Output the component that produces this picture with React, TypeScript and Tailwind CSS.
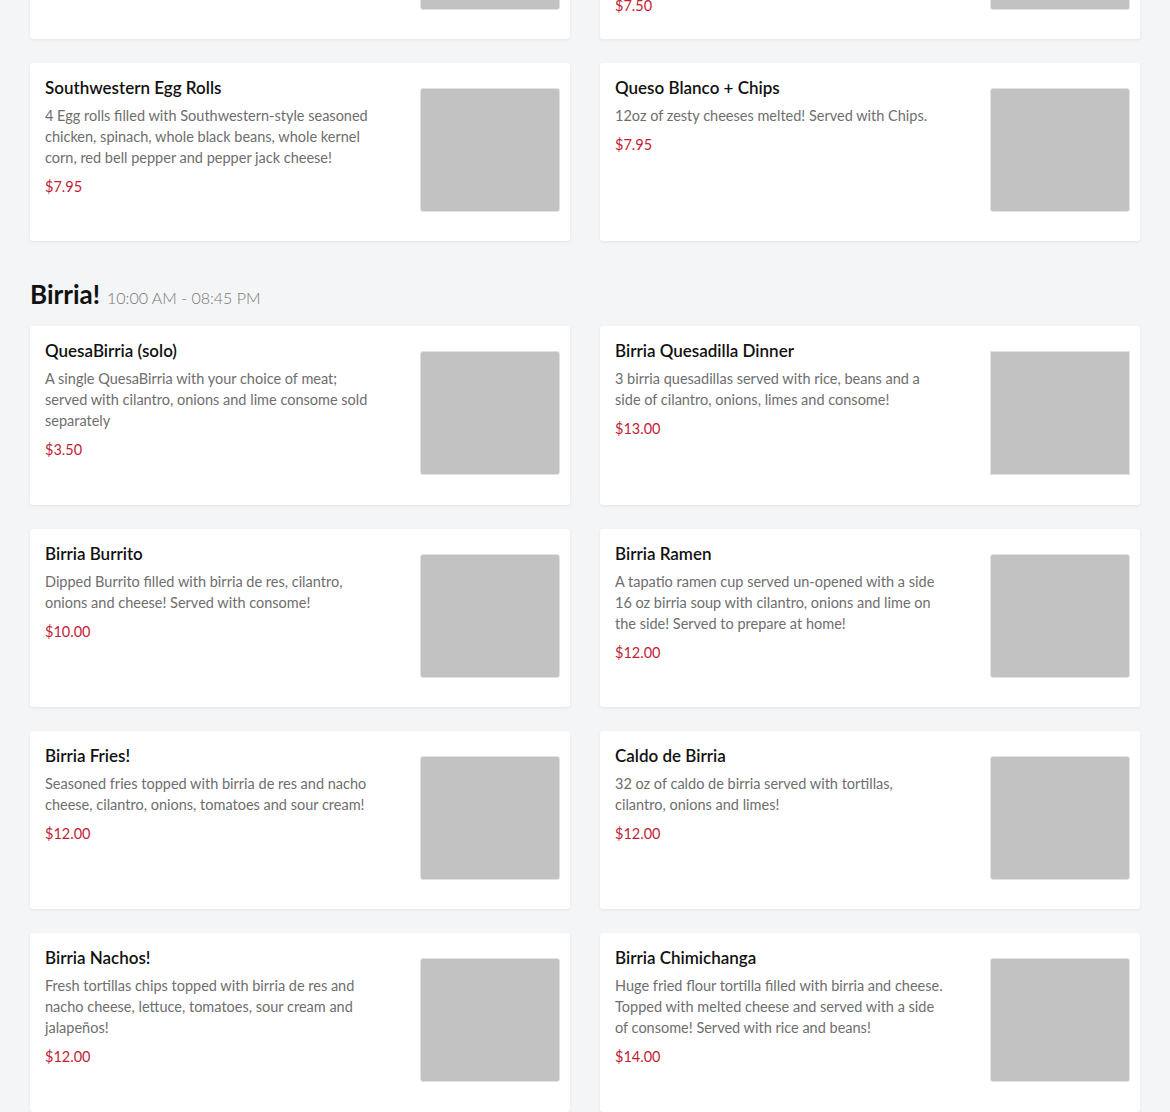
import React from 'react'

interface MenuItem {
  id: string
  name: string
  description: string[]
  price: string
  squareImage?: boolean
}

interface MenuSection {
  id: string
  title?: string
  hours?: string
  items: MenuItem[]
}

// description lines are kept as they wrap on the live menu
const sections: MenuSection[] = [
  {
    id: 'appetizers',
    items: [
      {
        id: 'chips-salsa',
        name: 'Chips & Salsa',
        description: ['Fresh tortilla chips served with our house-made salsa roja.'],
        price: '$4.50',
      },
      {
        id: 'guac-chips',
        name: 'Guacamole + Chips',
        description: [
          '12oz of fresh guacamole made daily with avocado,',
          'cilantro, onions, tomatoes, jalapeños and a squeeze',
          'of lime. Served with chips and a side of salsa roja,',
          'perfect to share!',
        ],
        price: '$7.50',
      },
      {
        id: 'egg-rolls',
        name: 'Southwestern Egg Rolls',
        description: [
          '4 Egg rolls filled with Southwestern-style seasoned',
          'chicken, spinach, whole black beans, whole kernel',
          'corn, red bell pepper and pepper jack cheese!',
        ],
        price: '$7.95',
      },
      {
        id: 'queso-blanco',
        name: 'Queso Blanco + Chips',
        description: ['12oz of zesty cheeses melted! Served with Chips.'],
        price: '$7.95',
      },
    ],
  },
  {
    id: 'birria',
    title: 'Birria!',
    hours: '10:00 AM - 08:45 PM',
    items: [
      {
        id: 'quesabirria',
        name: 'QuesaBirria (solo)',
        description: [
          'A single QuesaBirria with your choice of meat;',
          'served with cilantro, onions and lime consome sold',
          'separately',
        ],
        price: '$3.50',
      },
      {
        id: 'quesadilla-dinner',
        name: 'Birria Quesadilla Dinner',
        description: ['3 birria quesadillas served with rice, beans and a', 'side of cilantro, onions, limes and consome!'],
        price: '$13.00',
        squareImage: true,
      },
      {
        id: 'burrito',
        name: 'Birria Burrito',
        description: ['Dipped Burrito filled with birria de res, cilantro,', 'onions and cheese! Served with consome!'],
        price: '$10.00',
      },
      {
        id: 'ramen',
        name: 'Birria Ramen',
        description: [
          'A tapatio ramen cup served un-opened with a side',
          '16 oz birria soup with cilantro, onions and lime on',
          'the side! Served to prepare at home!',
        ],
        price: '$12.00',
      },
      {
        id: 'fries',
        name: 'Birria Fries!',
        description: [
          'Seasoned fries topped with birria de res and nacho',
          'cheese, cilantro, onions, tomatoes and sour cream!',
        ],
        price: '$12.00',
      },
      {
        id: 'caldo',
        name: 'Caldo de Birria',
        description: ['32 oz of caldo de birria served with tortillas,', 'cilantro, onions and limes!'],
        price: '$12.00',
      },
      {
        id: 'nachos',
        name: 'Birria Nachos!',
        description: [
          'Fresh tortillas chips topped with birria de res and',
          'nacho cheese, lettuce, tomatoes, sour cream and',
          'jalapeños!',
        ],
        price: '$12.00',
      },
      {
        id: 'chimichanga',
        name: 'Birria Chimichanga',
        description: [
          'Huge fried flour tortilla filled with birria and cheese.',
          'Topped with melted cheese and served with a side',
          'of consome! Served with rice and beans!',
        ],
        price: '$14.00',
      },
    ],
  },
]

function MenuCard({ item }: { item: MenuItem }) {
  return (
    <div className="flex h-[178.33px] rounded-[3px] bg-white pl-[15px] pr-[10px] pt-[14px] shadow-[0_1px_3px_rgba(0,0,0,0.07)]">
      <div className="w-[345px]">
        <h3 className="text-[17px] leading-[22px] font-semibold text-[#111]">{item.name}</h3>
        <p className="mt-[6px] whitespace-nowrap text-[14.5px] leading-[21px] text-[#6e6e6e]">
          {item.description.map((line, i) => (
            <span key={i} className="block">
              {line}
            </span>
          ))}
        </p>
        <p className="mt-[8px] text-[14.5px] leading-[21px] text-[#c21d36]">{item.price}</p>
      </div>
      <div
        className={`ml-auto mt-[11px] h-[124px] w-[140px] shrink-0 border border-[#e2e2e2] bg-[#c2c2c2] ${
          item.squareImage ? '' : 'rounded-[3px]'
        }`}
      ></div>
    </div>
  )
}

export default function App() {
  return (
    <div className="min-h-[1112px] overflow-hidden bg-[#f3f5f6] px-[30px] font-['Lato',sans-serif]">
      {sections.map((section, i) => (
        <div key={section.id} className={i === 0 ? 'mt-[-139.33px]' : 'mt-[36px]'}>
          {section.title && (
            <div className="mb-[11px] flex items-baseline gap-[7px] leading-[34px]">
              <h2 className="text-[26px] font-bold text-[#111]">{section.title}</h2>
              <span className="text-[16px] font-light text-[#777]">{section.hours}</span>
            </div>
          )}
          <div className="grid grid-cols-2 gap-x-[30px] gap-y-[24px]">
            {section.items.map((item) => (
              <MenuCard key={item.id} item={item} />
            ))}
          </div>
        </div>
      ))}
    </div>
  )
}
